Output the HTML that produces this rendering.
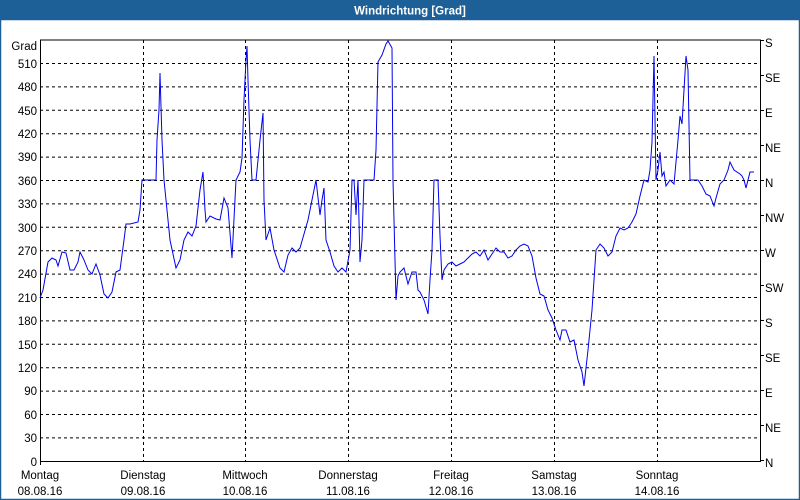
<!DOCTYPE html>
<html><head><meta charset="utf-8"><style>
html,body{margin:0;padding:0;background:#fff;}
svg{display:block;font-family:"Liberation Sans","DejaVu Sans",sans-serif;}
</style></head><body>
<svg width="800" height="500" viewBox="0 0 800 500" xmlns="http://www.w3.org/2000/svg">
<rect x="0" y="0" width="800" height="500" fill="#fff"/>
<rect x="0" y="0" width="800" height="20" fill="#1d5f97"/>
<rect x="0.5" y="19.5" width="799" height="480" fill="none" stroke="#1d5f97" stroke-width="1.5"/>
<text x="410" y="14.5" fill="#fff" font-size="11.5" font-weight="bold" text-anchor="middle">Windrichtung [Grad]</text>
<g stroke="#000" stroke-width="1" stroke-dasharray="3,3" fill="none">
<path d="M40 63.5H760M40 86.9H760M40 110.3H760M40 133.7H760M40 157.1H760M40 180.5H760M40 203.9H760M40 227.3H760M40 250.7H760M40 274.1H760M40 297.5H760M40 320.9H760M40 344.3H760M40 367.7H760M40 391.1H760M40 414.5H760M40 437.9H760"/>
<path d="M143.5 40V461M245.5 40V461M348.5 40V461M451.5 40V461M554.5 40V461M657.5 40V461"/>
</g>
<g stroke="#000" stroke-width="1" fill="none">
<path d="M40.5 40V461.5H760.5V40H40"/>
<path d="M760 40.5h4M760 75.5h4M760 110.5h4M760 145.5h4M760 180.5h4M760 215.5h4M760 250.5h4M760 285.5h4M760 320.5h4M760 355.5h4M760 390.5h4M760 425.5h4M760 460.5h4"/>
<path d="M40.5 461v4"/>
</g>
<g font-size="11.5" fill="#000" text-anchor="end">
<text x="37" y="50">Grad</text>
<text x="37" y="68">510</text><text x="37" y="91">480</text><text x="37" y="115">450</text>
<text x="37" y="138">420</text><text x="37" y="161">390</text><text x="37" y="185">360</text>
<text x="37" y="208">330</text><text x="37" y="232">300</text><text x="37" y="255">270</text>
<text x="37" y="278">240</text><text x="37" y="302">210</text><text x="37" y="325">180</text>
<text x="37" y="349">150</text><text x="37" y="372">120</text><text x="37" y="395">90</text>
<text x="37" y="419">60</text><text x="37" y="442">30</text><text x="37" y="466">0</text>
</g>
<g font-size="11.5" fill="#000">
<text x="765" y="47">S</text><text x="765" y="82">SE</text><text x="765" y="117">E</text>
<text x="765" y="152">NE</text><text x="765" y="187">N</text><text x="765" y="222">NW</text>
<text x="765" y="257">W</text><text x="765" y="292">SW</text><text x="765" y="327">S</text>
<text x="765" y="362">SE</text><text x="765" y="397">E</text><text x="765" y="432">NE</text>
<text x="765" y="467">N</text>
</g>
<g font-size="11.5" fill="#000" text-anchor="middle">
<text x="40" y="479">Montag</text><text x="40" y="495">08.08.16</text>
<text x="143" y="479">Dienstag</text><text x="143" y="495">09.08.16</text>
<text x="245" y="479">Mittwoch</text><text x="245" y="495">10.08.16</text>
<text x="348" y="479">Donnerstag</text><text x="348" y="495">11.08.16</text>
<text x="451" y="479">Freitag</text><text x="451" y="495">12.08.16</text>
<text x="554" y="479">Samstag</text><text x="554" y="495">13.08.16</text>
<text x="657" y="479">Sonntag</text><text x="657" y="495">14.08.16</text>
</g>
<polyline fill="none" stroke="#0000ee" stroke-width="1" points="40,298 43,290 48,262 52,258 56,260 58,266 62,252 66,253 70,270 74,270 78,262 80,252 84,260 88,270 92,274 96,264 100,275 104,294 108,298 112,292 116,272 120,270 124,240 126,224 130,224 138,222 140,210 142,180 150,180 156,180 157,140 159,110 160,73 162,140 164,180 166,200 170,240 176,268 180,260 184,240 188,232 192,236 196,226 200,190 203,172 205,210 206,222 210,216 216,219 220,220 224,198 228,208 232,258 236,180 240,172 242,158 244,100 246,60 247,46 248,80 250,140 252,180 256,180 260,140 263,113 264,200 266,240 270,228 274,250 280,268 284,272 288,255 292,248 296,252 300,248 304,234 308,220 312,200 316,180 320,215 322,200 324,188 326,240 330,252 334,266 338,272 342,268 346,272 350,250 352,180 354,180 356,215 358,180 360,262 362,240 364,180 370,180 374,180 376,150 378,62 382,55 386,44 388,41 392,48 393,180 394,220 396,300 398,276 400,272 404,268 408,284 412,272 416,272 418,290 420,292 424,300 428,314 430,280 432,250 434,180 438,180 440,236 442,280 444,270 448,264 452,262 456,266 460,264 464,262 468,258 472,254 476,252 480,256 484,250 488,260 492,254 496,248 500,252 504,252 508,258 512,256 516,250 520,246 524,244 528,246 532,256 536,278 540,294 544,296 548,310 552,318 556,330 560,340 562,330 566,330 570,342 574,340 578,360 582,372 584,386 588,350 592,310 596,250 600,244 604,248 608,256 612,252 616,236 620,228 624,230 628,228 632,222 636,214 640,196 644,180 648,182 650,170 652,142 654,56 656,180 658,170 660,152 662,176 664,172 666,186 670,180 674,184 678,140 680,116 682,124 686,56 688,70 690,180 694,180 698,180 702,186 706,194 710,196 714,206 716,198 720,184 724,180 728,170 730,162 734,170 740,174 742,176 744,180 746,188 748,180 750,172 754,172"/>
</svg>
</body></html>
